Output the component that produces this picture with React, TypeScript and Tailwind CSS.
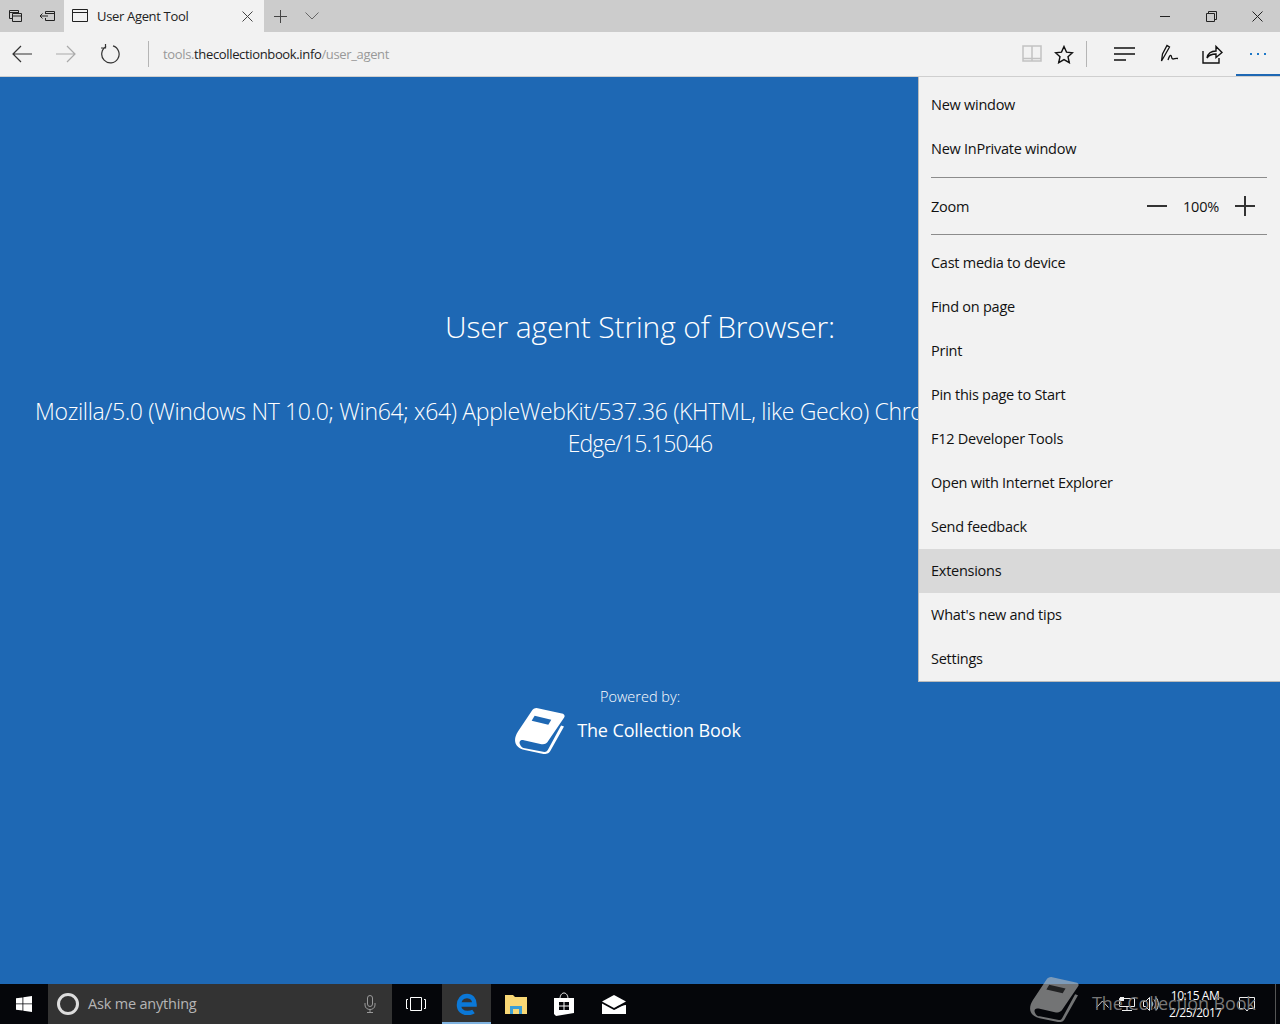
import React from 'react';

const FONT = 'font-["Open_Sans","Liberation_Sans",sans-serif]';

const BookIcon: React.FC<{ className?: string; fill?: string; band?: string }> = ({ className, fill = '#fff', band = '#1e68b4' }) => (
  <svg viewBox="0 0 52 48" className={className}>
    <path d="M22 1 L49 7 C51 8 51 10 50 11 L33 36 C31 38 29 38 27 38 L9 34 C5 33 4 36 5 38 C6 41 8 42 10 42 L30 46 C32 46 33 45 34 43 L47 19 L50 20 L36 45 C34 48 32 48 29 48 L10 44 C4 43 0 39 0 34 C0 31 1 28 3 25 L17 4 C18 2 20 1 22 1 Z" fill={fill} />
    <path d="M20 9 L37 13 L34 18 L17 14 Z" fill={band} />
  </svg>
);

const TabsAsideIcon = () => (
  <svg width="16" height="16" viewBox="0 0 16 16" fill="none" stroke="#222" strokeWidth="1">
    <path d="M1.500 2.500h9v3M1.500 2.500v8h3M1.500 4.500h9M4.500 5.500h9v8h-9zM4.500 8h9" />
  </svg>
);

const SetAsideIcon = () => (
  <svg width="18" height="14" viewBox="0 0 18 14" fill="none" stroke="#222" strokeWidth="1">
    <path d="M6.500 2.500h9v9h-9V9M6.500 5V2.500M1 7h8M3.500 4.500 1 7l2.500 2.500M6.500 4.500h9" />
  </svg>
);

const MenuRow: React.FC<{ label: string; active?: boolean }> = ({ label, active }) => (
  <div className={`h-11 flex items-center px-3 text-[14.5px] tracking-[-0.26px] text-[#111] ${active ? 'bg-[#d9d9d9]' : ''}`}>
    {label}
  </div>
);

const Menu = () => (
  <div className="absolute right-0 top-0 w-[362px] h-[605px] bg-[#f2f2f2] border-l border-b border-[#bbb] pt-[6px]">
    <MenuRow label="New window" />
    <MenuRow label="New InPrivate window" />
    <div className="ml-3 mr-[13px] mt-[6px] border-t border-[#8c8c8c]" />
    <div className="h-14 ml-3 mr-[13px] pr-3 flex items-center text-[14.5px] tracking-[-0.26px] text-[#111]">
      <span className="flex-1 mt-px">Zoom</span>
      <span className="w-5 h-[2px] bg-[#333]" />
      <span className="w-[68px] text-center mt-px">100%</span>
      <span className="relative w-5 h-5 flex items-center justify-center">
        <span className="w-5 h-[2px] bg-[#333]" />
        <span className="absolute w-[2px] h-5 bg-[#333]" />
      </span>
    </div>
    <div className="ml-3 mr-[13px] mb-[6px] border-t border-[#8c8c8c]" />
    {['Cast media to device', 'Find on page', 'Print', 'Pin this page to Start', 'F12 Developer Tools', 'Open with Internet Explorer', 'Send feedback'].map(l => (
      <MenuRow key={l} label={l} />
    ))}
    <MenuRow label="Extensions" active />
    <MenuRow label="What's new and tips" />
    <MenuRow label="Settings" />
  </div>
);

const TitleBar = () => (
  <div className="h-8 bg-[#cccccc] flex items-center">
    <div className="w-8 flex justify-center"><TabsAsideIcon /></div>
    <div className="w-8 flex justify-center"><SetAsideIcon /></div>
    <div className="w-[200px] h-8 bg-[#f2f2f2] flex items-center pl-2 pr-[11px]">
      <svg width="16" height="14" viewBox="0 0 16 14" fill="none" stroke="#222"><path d="M.5.5h15v12H.5zM.5 3.500h15" /></svg>
      <span className="ml-[9px] mt-px flex-1 text-[13px] tracking-[-0.33px] text-[#222]">User Agent Tool</span>
      <svg width="11" height="11" viewBox="0 0 11 11" stroke="#444"><path d="M.5.5l10 10M10.500.5l-10 10" /></svg>
    </div>
    <div className="w-[33px] flex justify-center">
      <svg width="13" height="13" viewBox="0 0 13 13" stroke="#444"><path d="M6.500 0v13M0 6.500h13" /></svg>
    </div>
    <div className="w-[30px] flex justify-center">
      <svg width="14" height="8" viewBox="0 0 14 8" fill="none" stroke="#666"><path d="M.5.5 7 7l6.500-6.500" /></svg>
    </div>
    <div className="flex-1" />
    <div className="w-[46px] flex justify-center"><span className="w-[10px] h-px bg-[#222]" /></div>
    <div className="w-[46px] flex justify-center">
      <svg width="11" height="11" viewBox="0 0 11 11" fill="none" stroke="#222"><path d="M.5 2.500h8v8h-8zM2.500 2.500v-2h8v8h-2" /></svg>
    </div>
    <div className="w-[46px] flex justify-center">
      <svg width="11" height="11" viewBox="0 0 11 11" stroke="#222"><path d="M.5.5l10 10M10.500.5l-10 10" /></svg>
    </div>
  </div>
);

const Toolbar = () => (
  <div className="h-[45px] bg-[#f2f2f2] border-b border-[#cfcfcf] flex items-center">
    <div className="w-11 flex justify-center">
      <svg width="20" height="18" viewBox="0 0 20 18" fill="none" stroke="#333" strokeWidth="1.2"><path d="M20 9H1M9 1 1 9l8 8" /></svg>
    </div>
    <div className="w-11 flex justify-center">
      <svg width="20" height="18" viewBox="0 0 20 18" fill="none" stroke="#aaa" strokeWidth="1.2"><path d="M0 9h19M11 1l8 8-8 8" /></svg>
    </div>
    <div className="w-11 flex justify-center">
      <svg width="20" height="20" viewBox="0 0 20 20" fill="none" stroke="#333" strokeWidth="1.2"><path d="M6.200 2.600A8.700 8.700 0 1 0 13 1.900M5.500 -1v5H1" /></svg>
    </div>
    <div className="ml-[16px] w-px h-[26px] bg-[#b5b5b5]" />
    <div className="ml-[14px] mt-px flex-1 text-[13px] tracking-[-0.35px] text-[#999]">
      tools.<span className="text-[#222]">thecollectionbook.info</span>/user_agent
    </div>
    <svg width="20" height="18" viewBox="0 0 20 18" fill="none" stroke="#c2c2c2" strokeWidth="1.5" className="mr-[12px]">
      <path d="M1 1h18v15H1zM10 1v15M1 13.500h18" />
    </svg>
    <svg width="20" height="19" viewBox="0 0 20 19" fill="none" stroke="#111" strokeWidth="1.4" className="mr-[12px]">
      <path d="M10 1.500l2.500 5.600 6 .6-4.500 4 1.300 6L10 14.600l-5.300 3.100 1.300-6-4.500-4 6-.6z" />
    </svg>
    <div className="w-px h-[26px] bg-[#b5b5b5] mr-[27px]" />
    <svg width="21" height="14" viewBox="0 0 21 14" stroke="#111" strokeWidth="1.300" className="mr-[25px]">
      <path d="M0 1h21M0 7h21M0 13h12" />
    </svg>
    <svg width="20" height="20" viewBox="0 0 20 20" fill="none" stroke="#111" strokeWidth="1.300" className="mr-[22px]">
      <path d="M1.500 17 2.500 10 7 1.500 9.500 3 5 11zM8 16c1-3 2-5 3-4.500s0 3.500 2 3.500 2-1 5-.5" />
    </svg>
    <svg width="21" height="20" viewBox="0 0 21 20" fill="none" stroke="#111" strokeWidth="1.400" className="mr-[13px]">
      <path d="M1 7v12h16v-5M5 14c1-5 4-7 9-7V2.500l6 6-6 5V10c-4 0-7 1-9 4z" />
    </svg>
    <div className="relative w-[44px] h-[44px] flex items-center justify-center gap-[5px]">
      <span className="w-[2px] h-[2px] bg-[#1e78c8]" />
      <span className="w-[2px] h-[2px] bg-[#1e78c8]" />
      <span className="w-[2px] h-[2px] bg-[#1e78c8]" />
      <span className="absolute left-0 right-0 bottom-0 h-[2px] bg-[#1e68b4]" />
    </div>
  </div>
);

const Page = () => (
  <div className="relative flex-1 bg-[#1e68b4] text-white overflow-hidden">
    <div className="flex flex-col items-center pt-[232px]">
      <h1 className="text-[30px] leading-9 tracking-[-0.15px] font-light">User agent String of Browser:</h1>
      <p className="mt-[50px] text-[23px] leading-8 tracking-[-0.33px] font-light text-center whitespace-nowrap">
        Mozilla/5.0 (Windows NT 10.0; Win64; x64) AppleWebKit/537.36 (KHTML, like Gecko) Chrome/52.0.2743.116 Safari/537.36
        <br />
        <span className="tracking-[-0.9px]">Edge/15.15046</span>
      </p>
      <div className="mt-[228px] text-[14.5px] leading-5 font-light">Powered by:</div>
      <div className="flex items-center gap-[11px] ml-[-24px]">
        <BookIcon className="w-[51px] h-[47px]" />
        <span className="text-[18px] tracking-[-0.12px]">The Collection Book</span>
      </div>
    </div>
    <Menu />
  </div>
);

const Taskbar = () => (
  <div className="relative h-10 bg-[#05060a] flex items-center">
    <div className="w-12 flex justify-center">
      <svg width="16" height="16" viewBox="0 0 16 16" fill="#fff"><path d="M0 2.300 6.500 1.400v6.100H0zM7.300 1.300 16 0v7.500H7.300zM0 8.300h6.500v6.300L0 13.700zM7.300 8.300H16V16l-8.700-1.300z" /></svg>
    </div>
    <div className="w-[344px] h-10 bg-[#333333] flex items-center pl-[9px] pr-[16px]">
      <span className="w-[22px] h-[22px] rounded-full border-[3px] border-[#ddd]" />
      <span className="ml-[9px] flex-1 text-[14.5px] tracking-[-0.2px] text-[#b5b5b5]">Ask me anything</span>
      <svg width="12" height="18" viewBox="0 0 12 18" fill="none" stroke="#999"><rect x="3.500" y=".5" width="5" height="11" rx="2.500" /><path d="M1 8v2c0 6 10 6 10 0V8M6 15v3M3 17.500h6" /></svg>
    </div>
    <div className="w-[50px] flex justify-center pr-[2px]">
      <svg width="20" height="14" viewBox="0 0 20 14" fill="none" stroke="#fff"><path d="M4.500.5h11v13h-11zM2 2.500H.5v9H2M18 2.500h1.500v9H18" /></svg>
    </div>
    <div className="relative w-[49px] h-10 bg-[#333] flex items-center justify-center">
      <svg width="22" height="22" viewBox="0 0 22 22" fill="none">
        <path d="M3 11.500h15.500C18.500 6 15.500 3 11 3 6 3 3 7 3 12c0 5 3.500 8 8.500 8 2.500 0 4.500-.5 6-1.500" stroke="#0b78d7" strokeWidth="4.500" />
      </svg>
      <span className="absolute left-0 right-0 bottom-0 h-[2px] bg-[#7fb2df]" />
    </div>
    <div className="w-[50px] flex justify-center">
      <svg width="22" height="20" viewBox="0 0 22 20"><path d="M0 1h8l2 2h12v17H0z" fill="#f8d775" /><path d="M5 20v-8h12v8h-3v-5H8v5z" fill="#3a9fd6" /></svg>
    </div>
    <div className="w-[46px] flex justify-center">
      <svg width="20" height="24" viewBox="0 0 20 24" fill="#fff"><path d="M0 6h20v15L2 24 0 22z" /><path d="M6 7c0-8 8-8 8 0" fill="none" stroke="#fff" /><path d="M5 10h4.500v3.500H5zM10.500 10H15v3.500h-4.500zM5 14.500h4.500V18H5zM10.500 14.500H15V18h-4.500z" fill="#05060a" /></svg>
    </div>
    <div className="w-[54px] flex justify-center">
      <svg width="24" height="19" viewBox="0 0 24 19" fill="#fff"><path d="M0 6.500 12 0l12 6.500L12 13z" /><path d="M0 8.500 12 15l6-3 6-3v10H0z" /><path d="M12 15 24 7v3l-8 1z" fill="#05060a" /></svg>
    </div>
    <div className="flex-1" />
    <div className="flex items-center text-white">
      <svg width="13" height="8" viewBox="0 0 13 8" fill="none" stroke="#ddd" className="mr-[10px]"><path d="M.5 7.500 6.500 1l6 6.500" /></svg>
      <svg width="16" height="15" viewBox="0 0 16 15" fill="none" stroke="#eee" className="mr-[8px]"><path d="M.5 1.500h15v8H.5zM8 9.500v4M3 13.500h10" /><rect x="1" y="0" width="4" height="4" fill="#eee" stroke="none" /></svg>
      <svg width="16" height="16" viewBox="0 0 16 16" fill="none" stroke="#eee" className="mr-[10px]"><path d="M.5 5.500h2l4-4v13l-4-4h-2zM9 5.500c1 1.500 1 3.500 0 5M11 3.500c2 2.500 2 6.500 0 9M13 1.500c3 3.500 3 9.500 0 13" /></svg>
      <div className="w-[52px] text-center text-[12px] leading-[17px] tracking-[-0.45px] whitespace-nowrap">
        <div>10:15 AM</div>
        <div>2/25/2017</div>
      </div>
      <svg width="16" height="15" viewBox="0 0 16 15" fill="none" stroke="#eee" className="ml-[18px] mr-[25px]"><path d="M.5.5h15v11H10L8 14l-2-2.500H.5z" /></svg>
    </div>
    <span className="absolute right-[4px] top-0 bottom-0 w-px bg-[#555]" />
    {/* watermark sits over the taskbar */}
    <div className="absolute left-[1030px] top-[-8px] flex items-center pointer-events-none whitespace-nowrap">
      <BookIcon className="w-[50px] h-[46px] opacity-60" fill="#bdbdbd" band="#333" />
      <span className="ml-[12px] mt-[8px] text-[18px] tracking-[-0.12px] text-[#777]">The Collection Book</span>
    </div>
  </div>
);

export default function App() {
  return (
    <div className={`h-[1024px] w-[1280px] flex flex-col overflow-hidden ${FONT}`}>
      <TitleBar />
      <Toolbar />
      <Page />
      <Taskbar />
    </div>
  );
}
